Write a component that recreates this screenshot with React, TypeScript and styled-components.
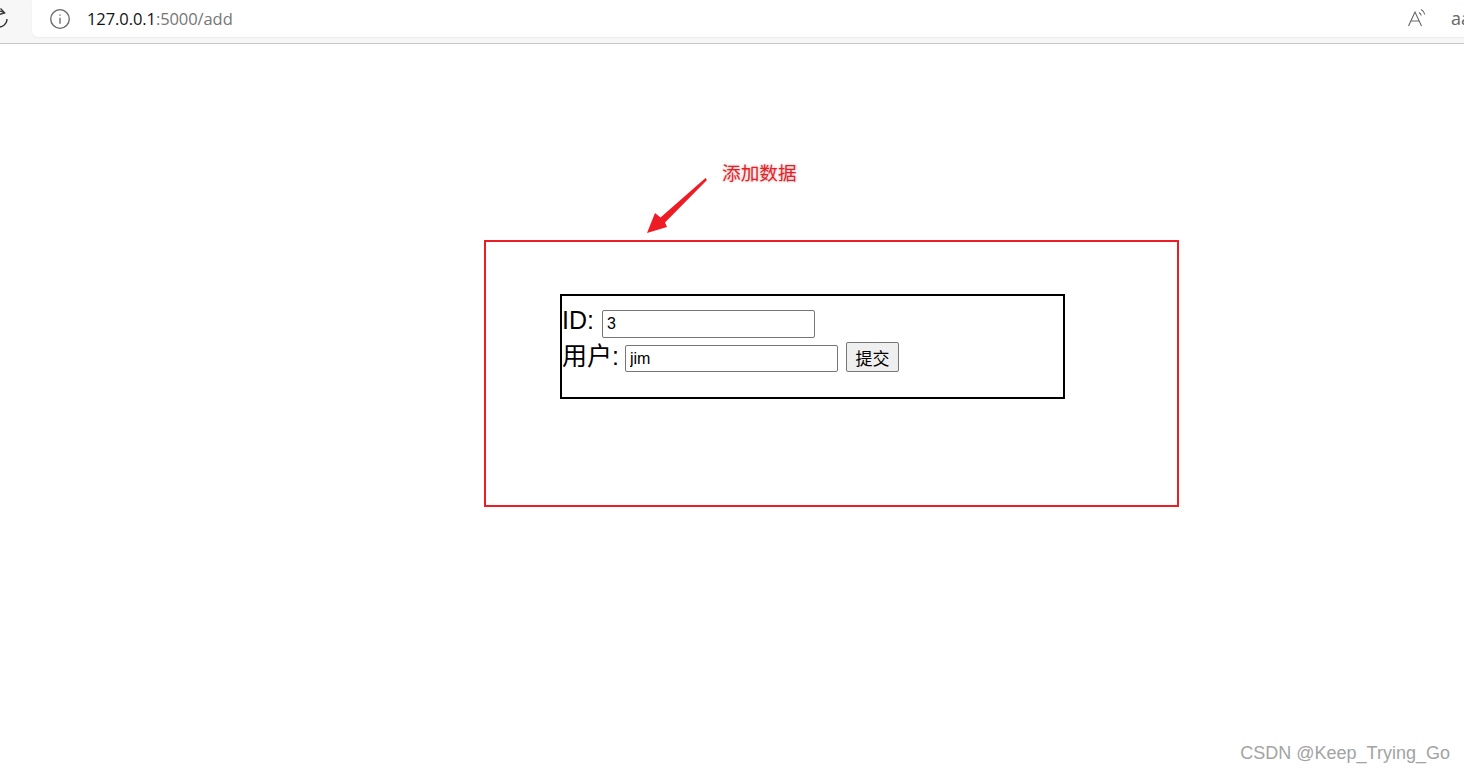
import React from 'react';
import styled, { createGlobalStyle } from 'styled-components';

const Global = createGlobalStyle`
  html, body { margin: 0; padding: 0; background: #fff; overflow: hidden; }
  body { font-family: "Liberation Sans", "Noto Sans CJK SC", sans-serif; }
`;
const Page = styled.div`width: 1464px; height: 772px; position: relative; overflow: hidden; background: #fff;`;
const Toolbar = styled.header`
  height: 44px; box-sizing: border-box; background: #f7f7f7; border-bottom: 1px solid #c6c6c6;
  display: flex; align-items: flex-start; padding-left: 32px; position: relative;
`;
const Reload = styled.svg`position: absolute; left: -7px; top: 5px;`;
const Omni = styled.div`
  width: 1432px; height: 37px; background: #fff; border-radius: 0 0 0 6px; box-sizing: border-box;
  display: flex; align-items: center; padding-left: 17px; box-shadow: 0 1px 2px rgba(0,0,0,.05);
`;
const Url = styled.span`
  margin-left: 16px; font-family: "Open Sans", "Noto Sans", sans-serif; font-size: 16.5px; letter-spacing: -0.08px; color: #767676;
  b { font-weight: 400; color: #111; }
`;
const RightIcons = styled.div`
  position: absolute; left: 1407px; top: 7px; display: flex; align-items: center; gap: 22px;
`;
const Aa = styled.span`font-family: "Open Sans", sans-serif; font-size: 18px; color: #666; line-height: 20px;`;
const Stage = styled.main`padding: 196px 0 0 484px;`;
const RedBox = styled.section`
  width: 695px; height: 267px; box-sizing: border-box; border: 2px solid #ee1c25; padding: 52px 0 0 74px;
`;
const Panel = styled.form`
  width: 505px; height: 105px; box-sizing: border-box; border: 2px solid #000; padding-top: 7px;
  font-size: 25px; line-height: 35px; color: #000; font-family: "Liberation Sans", "Noto Sans CJK SC", sans-serif;
`;
const Row = styled.div<{ $h: number }>`height: ${p => p.$h}px; display: flex; align-items: flex-start;`;
const Label = styled.label`display: block; white-space: nowrap;`;
const Field = styled.input<{ $top: number; $left: number; $h: number }>`
  width: 213px; height: ${p => p.$h}px; box-sizing: border-box; margin: ${p => p.$top}px 0 0 ${p => p.$left}px;
  border: 1px solid #767676; border-radius: 2px; padding: 1px 4px; background: #fff;
  font: 16px "Liberation Sans", "Noto Sans CJK SC", sans-serif; color: #000; outline: none;
`;
const Submit = styled.button`
  width: 53px; height: 30px; box-sizing: border-box; margin: 3px 0 0 8px; padding: 0;
  border: 1px solid #767676; border-radius: 2px; background: #efefef;
  font: 17px "Noto Sans CJK SC", sans-serif; color: #000;
`;
const Note = styled.span`
  position: absolute; left: 722px; top: 160px; font: 18.7px/24px "Noto Sans CJK SC", sans-serif; color: #ee1c25;
  text-shadow: 0 0 3px rgba(120,120,120,.55);
`;
const Arrow = styled.svg`position: absolute; left: 640px; top: 170px;`;
const Mark = styled.span`
  position: absolute; right: 14px; top: 741px; font: 18px/24px "Liberation Sans", sans-serif; color: #a3a3a3;
`;

export default function App() {
  return (
    <Page>
      <Global />
      <Toolbar>
        <Reload width="16" height="24" viewBox="0 0 16 24" fill="none" stroke="#333" strokeWidth="1.3">
          <path d="M14 14a8 8 0 1 1-3-6.2" />
          <path d="M7.5 3.5l4.2 4.4-5 1.4" />
        </Reload>
        <Omni>
          <svg width="22" height="22" viewBox="0 0 22 22" fill="none" stroke="#666" strokeWidth="1.3">
            <circle cx="11" cy="11" r="9.3" />
            <path d="M11 9.8v6M11 6.4v1.4" />
          </svg>
          <Url><b>127.0.0.1</b>:5000/add</Url>
        </Omni>
        <RightIcons>
          <svg width="22" height="22" viewBox="0 0 22 22" fill="none" stroke="#666" strokeWidth="1.1">
            <path d="M1.5 19L8 5 14.5 19M3.8 14h8.4" />
            <path d="M12 5.5c1.2.7 2 1.7 2.3 3M14 2.5c2 1 3.3 2.7 3.8 5" />
          </svg>
          <Aa>aa</Aa>
        </RightIcons>
      </Toolbar>
      <Stage>
        <RedBox>
          <Panel onSubmit={e => e.preventDefault()}>
            <Row $h={36}>
              <Label htmlFor="id">ID:</Label>
              <Field id="id" defaultValue="3" $top={7} $left={8} $h={28} />
            </Row>
            <Row $h={35}>
              <Label htmlFor="user">用户:</Label>
              <Field id="user" defaultValue="jim" $top={6} $left={6} $h={27} />
              <Submit type="submit">提交</Submit>
            </Row>
          </Panel>
        </RedBox>
      </Stage>
      <Note>添加数据</Note>
      <Arrow width="72" height="66" viewBox="0 0 72 66">
        <path d="M65.5 8L67 10 25 52.5 27 57 7 63 15 43 20.5 47.5Z" fill="#ee1c25" />
      </Arrow>
      <Mark>CSDN @Keep_Trying_Go</Mark>
    </Page>
  );
}
